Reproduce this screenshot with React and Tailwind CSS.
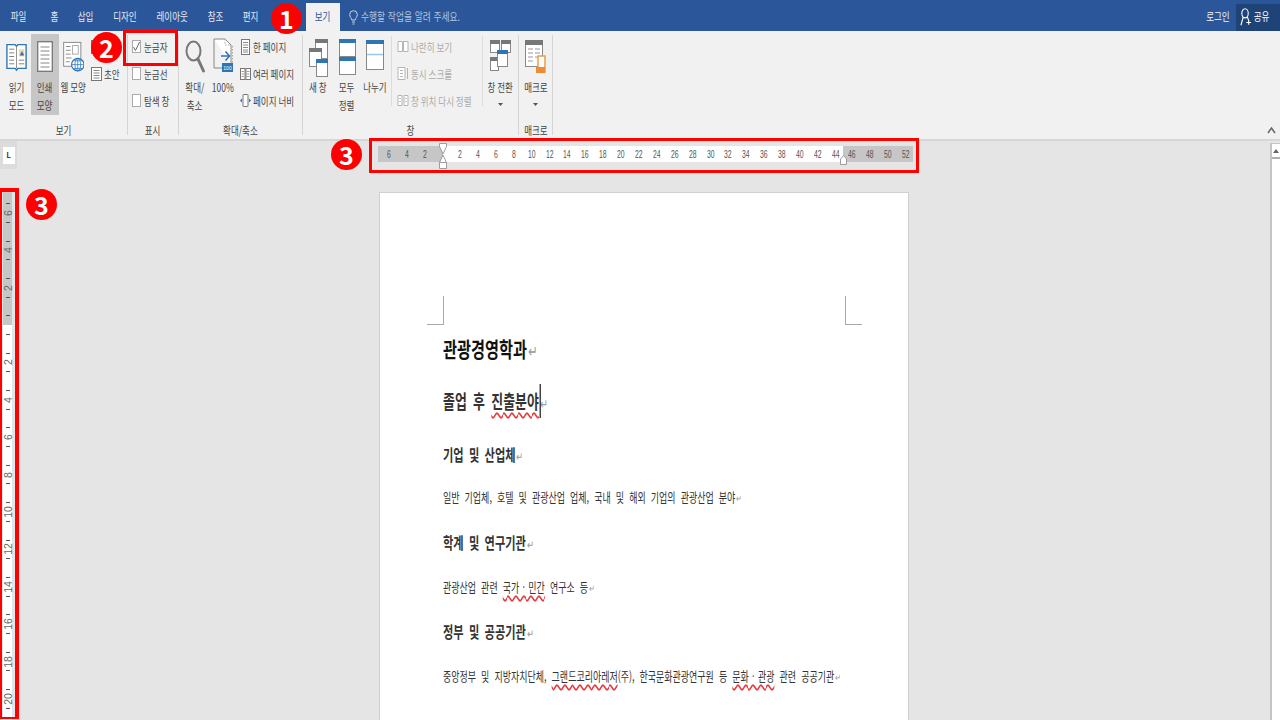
import React from 'react';

const big = 'block origin-center scale-x-[0.74] whitespace-nowrap text-[11.5px] leading-[18px] text-[#444]';
const small = 'block origin-left scale-x-[0.74] whitespace-nowrap text-[11.5px] leading-[18px]';
const badge = 'absolute flex h-[31px] w-[31px] items-center justify-center rounded-full bg-[#f00] text-[25px] leading-none font-bold text-white';

const tabs = [
  ['파일', 'w-[37px]'],
  ['홈', 'w-[34px]'],
  ['삽입', 'w-[30px]'],
  ['디자인', 'w-[48px]'],
  ['레이아웃', 'w-[46px]'],
  ['참조', 'w-[41px]'],
  ['편지', 'w-[30px]'],
];

const Book = () => (
  <svg className="mt-[5px] h-[31px] w-[21px]" viewBox="0 0 23 32" fill="none">
    <path d="M1 3h9l1.500 2L13 3h9v26h-9l-1.500 2L10 29H1z" fill="#fff" stroke="#2e75b6" strokeWidth="1.500" />
    <path d="M11.500 5v24" stroke="#888" />
    <path d="M3.500 8h5.500M3.500 12h5.500M3.500 16h5.500M3.500 20h5.500M3.500 24h5.500M14 20h6M14 24h6" stroke="#777" />
    <path d="M14 8h6v8h-6z" fill="#f4d8a8" />
    <path d="M15 15l2.500-5 2.500 5z" fill="#2e75b6" />
  </svg>
);

const PrintPage = () => (
  <svg className="mt-[5px] h-[31px] w-[16px]" viewBox="0 0 16 31" fill="none">
    <rect x=".7" y=".7" width="14.600" height="29.600" fill="#fff" stroke="#777" strokeWidth="1.300" />
    <path d="M3.500 6h9M3.500 10h9M3.500 14h9M3.500 18h9M3.500 22h9M3.500 26h9" stroke="#888" />
  </svg>
);

const WebPage = () => (
  <svg className="mt-[5px] h-[32px] w-[21px]" viewBox="0 0 22 32" fill="none">
    <rect x=".7" y=".7" width="18" height="25" fill="#fff" stroke="#888" />
    <path d="M3 5h5M3 9h5M3 13h5M3 17h6M3 21h4" stroke="#888" />
    <rect x="10" y="4" width="6" height="9" stroke="#aaa" />
    <circle cx="15.500" cy="24" r="6.500" fill="#fff" stroke="#2e75b6" strokeWidth="1.200" />
    <path d="M9 24h13M15.500 17.500v13M11 20h9M11 28h9" stroke="#2e75b6" strokeWidth=".8" />
    <ellipse cx="15.500" cy="24" rx="3" ry="6.500" stroke="#2e75b6" strokeWidth=".8" />
  </svg>
);

const LinesPage = () => (
  <svg className="h-[14px] w-[11px] shrink-0" viewBox="0 0 11 14" fill="none">
    <rect x=".5" y=".5" width="10" height="13" fill="#fff" stroke="#777" />
    <path d="M2.500 3.500h6M2.500 6h6M2.500 8.500h6M2.500 11h6" stroke="#888" />
  </svg>
);

const Magnifier = () => (
  <svg className="mt-[4px] h-[33px] w-[20px]" viewBox="0 0 20 33" fill="none">
    <ellipse cx="8.500" cy="11" rx="7" ry="9.500" stroke="#777" strokeWidth="2" />
    <path d="M13 19l5.500 12" stroke="#777" strokeWidth="3" strokeLinecap="round" />
  </svg>
);

const Hundred = () => (
  <svg className="mt-[2px] h-[35px] w-[21px]" viewBox="0 0 21 35" fill="none">
    <path d="M1 1h11l6 6v20" stroke="#888" fill="#fff" />
    <path d="M1 1v29h11" stroke="#888" />
    <path d="M12 1v6h6" stroke="#aaa" strokeDasharray="1.500 1.500" />
    <path d="M19.500 8v18" stroke="#aaa" strokeDasharray="1.500 1.500" />
    <path d="M8 18h8M12.500 13.500l4 4.500-4 4.500" stroke="#2e75b6" strokeWidth="1.600" />
    <rect x="9" y="25" width="11" height="9" fill="#2e75b6" />
    <text x="14.500" y="32" fontSize="5" fill="#fff" textAnchor="middle" fontFamily="Liberation Sans">100</text>
  </svg>
);

const OnePage = () => (
  <svg className="ml-px h-[16px] w-[9px] shrink-0" viewBox="0 0 9 16" fill="none">
    <rect x=".5" y=".5" width="8" height="15" fill="#fff" stroke="#777" />
    <path d="M2 3.500h5M2 6h5M2 8.500h5M2 11h5M2 13h5" stroke="#888" />
  </svg>
);

const TwoPages = ({ color = '#777' }) => (
  <svg className="h-[12px] w-[11px] shrink-0" viewBox="0 0 11 12" fill="none">
    <rect x=".5" y=".5" width="4.500" height="11" fill="#fff" stroke={color} />
    <rect x="6" y=".5" width="4.500" height="11" fill="#fff" stroke={color} />
    <path d="M1.500 3.500h2.500M1.500 6h2.500M1.500 8.500h2.500M7 3.500h2.500M7 6h2.500M7 8.500h2.500" stroke={color} strokeWidth=".7" />
  </svg>
);

const PageWidth = () => (
  <svg className="h-[13px] w-[11px] shrink-0" viewBox="0 0 11 13" fill="none">
    <rect x="3" y=".5" width="5" height="12" rx=".5" fill="#fff" stroke="#777" />
    <path d="M0 6.500l2-2v4zM11 6.500l-2-2v4z" fill="#2e75b6" />
  </svg>
);

const Win = ({ x, y, w, h, bar = '#777' }) => (
  <g>
    <rect x={x + 0.5} y={y + 0.5} width={w} height={h} fill="#fff" stroke="#888" />
    <rect x={x} y={y} width={w + 1} height="4" fill={bar} />
  </g>
);

const NewWindow = () => (
  <svg className="mt-[3px] h-[38px] w-[19px]" viewBox="0 0 19 38" fill="none">
    <Win x={6} y={0} w={12} h={19} />
    <Win x={0} y={9} w={12} h={18} />
    <Win x={7} y={20} w={11} h={17} bar="#2e75b6" />
  </svg>
);

const StackWindows = () => (
  <svg className="mt-[3px] h-[36px] w-[17px]" viewBox="0 0 17 36" fill="none">
    <Win x={0} y={0} w={16} h={17} bar="#2e75b6" />
    <Win x={0} y={18} w={16} h={17} bar="#2e75b6" />
  </svg>
);

const SplitWindow = () => (
  <svg className="mt-[4px] h-[30px] w-[18px]" viewBox="0 0 18 30" fill="none">
    <Win x={0} y={0} w={17} h={29} bar="#2e75b6" />
    <path d="M1 14.500h16" stroke="#9dc3e6" strokeWidth="1.500" />
  </svg>
);

const SideBySide = () => (
  <svg className="h-[13px] w-[12px] shrink-0" viewBox="0 0 12 13" fill="none">
    <path d="M1 1.500h4.500v10H1zM6.500 1.500H11v10H6.500z" fill="#fff" stroke="#b5b5b5" />
  </svg>
);

const SyncScroll = () => (
  <svg className="h-[15px] w-[12px] shrink-0" viewBox="0 0 12 15" fill="none">
    <path d="M1 1.500h7v12H1z" fill="#fff" stroke="#b5b5b5" />
    <path d="M3 4.500h3M3 7.500h3M3 10.500h3M10.500 2v11" stroke="#b5b5b5" />
  </svg>
);

const ResetPos = () => (
  <svg className="h-[13px] w-[12px] shrink-0" viewBox="0 0 12 13" fill="none">
    <path d="M1 1.500h4v10H1zM7 1.500h4v10H7z" fill="#fff" stroke="#b5b5b5" />
    <path d="M2 4.500h2M2 7.500h2M8 4.500h2M8 7.500h2" stroke="#c5c5c5" />
  </svg>
);

const SwitchWindows = () => (
  <svg className="mt-[4px] h-[31px] w-[21px]" viewBox="0 0 21 31" fill="none">
    <Win x={0} y={0} w={9} h={12} />
    <Win x={11} y={0} w={9} h={12} />
    <Win x={0} y={17} w={8} h={13} />
    <Win x={7} y={10} w={10} h={16} bar="#2e75b6" />
  </svg>
);

const Macro = () => (
  <svg className="mt-[4px] h-[34px] w-[21px]" viewBox="0 0 21 34" fill="none">
    <rect x=".5" y=".5" width="17" height="26" fill="#fff" stroke="#888" />
    <rect x="0" y="0" width="18" height="5" fill="#777" />
    <path d="M3 9h5M10 9h5M3 13h5M10 13h5M3 17h5M10 17h3M3 21h5" stroke="#999" />
    <path d="M13 16h7v16h-7z" fill="#fff" stroke="#ed9a4c" strokeWidth="1.500" />
    <path d="M11 27h9v6h-9z" fill="#ed8b36" />
  </svg>
);

const Check = ({ checked }) => (
  <span className="flex h-[13px] w-[9px] shrink-0 items-center justify-center border border-[#ababab] bg-white">
    {checked && (
      <svg className="h-[11px] w-[7px]" viewBox="0 0 7 11" fill="none">
        <path d="M.5 6l2 3.500L6.500 1" stroke="#666" />
      </svg>
    )}
  </span>
);

const BigBtn = ({ width, active, lines, icon, arrow }) => (
  <div className={`flex shrink-0 flex-col items-center ${width} ${active ? '-mt-[2px] h-[81px] bg-[#c6c6c6] pt-[2px]' : ''}`}>
    <div className="flex h-[42px] justify-center">{icon}</div>
    {lines.map((l) => (
      <span key={l} className={big}>{l}</span>
    ))}
    {arrow && (
      <svg className="mt-[7px] h-[3px] w-[5px]" viewBox="0 0 5 3">
        <path d="M0 0h5L2.500 3z" fill="#555" />
      </svg>
    )}
  </div>
);

const Row = ({ icon, text, color = 'text-[#444]', gap = 'gap-[3px]' }) => (
  <div className={`flex h-[27px] items-center ${gap}`}>
    {icon}
    {text && <span className={`${small} ${color}`}>{text}</span>}
  </div>
);

const Group = ({ width, label, children }) => (
  <div className={`mt-1 flex h-[100px] shrink-0 flex-col border-r border-[#d5d5d5] ${width}`}>
    <div className="flex flex-1 pt-px">{children}</div>
    <div className="-mb-[5px] flex h-[20px] justify-center">
      <span className={big + ' leading-[20px]'}>{label}</span>
    </div>
  </div>
);

const Mark = () => <span className="ml-px text-[0.75em] leading-none font-normal text-[#999]">↵</span>;

const hNums = [2, 4, 6, 8, 10, 12, 14, 16, 18, 20, 22, 24, 26, 28, 30, 32, 34, 36, 38, 40, 42, 44];

const RulerNum = ({ n }) => (
  <span className="flex w-[17.9px] shrink-0 justify-center">
    <span className="scale-x-[0.65] font-['Liberation_Sans',sans-serif] text-[10.5px] leading-[16px] text-[#555]">{n}</span>
  </span>
);

const Tick = () => <span className="h-px w-[4px] shrink-0 bg-[#555]" />;

const VCell = ({ n }) => (
  <div className="flex h-[37.4px] shrink-0 flex-col items-center justify-between py-[8.9px]">
    <Tick />
    <span className="-rotate-90 whitespace-nowrap font-['Liberation_Sans',sans-serif] text-[10.5px] leading-[10px] text-[#666]">{n}</span>
    <Tick />
  </div>
);

const HalfCell = () => (
  <div className="flex h-[18.7px] shrink-0 flex-col items-center justify-center">
    <Tick />
  </div>
);

const h1 = 'h-[24px] origin-left scale-x-[0.725] whitespace-nowrap text-[21px] leading-[24px] font-bold text-[#111]';
const h2 = 'h-[24px] origin-left scale-x-[0.68] whitespace-nowrap text-[19px] leading-[24px] font-bold text-[#333] [word-spacing:5px]';
const h3 = 'h-[24px] origin-left scale-x-[0.7] whitespace-nowrap text-[16px] leading-[24px] font-semibold text-[#333] [word-spacing:4px]';
const body = 'h-[24px] origin-left scale-x-[0.69] whitespace-nowrap text-[13px] leading-[24px] text-[#333] [word-spacing:4.500px]';
const wavy = 'underline decoration-wavy decoration-[#e8383d] decoration-[1.5px] underline-offset-[3px] [word-spacing:0px]';

export default function App() {
  return (
    <div className="relative flex h-[720px] w-[1280px] flex-col overflow-hidden bg-[#e5e5e5] font-['Noto_Sans_CJK_KR','Noto_Sans',sans-serif]">
      {/* title bar */}
      <div className="flex h-[31px] shrink-0 items-end bg-[#2b579a]">
        {tabs.map(([t, w]) => (
          <div key={t} className={`flex h-[28px] shrink-0 items-center justify-center ${w}`}>
            <span className="scale-x-[0.74] whitespace-nowrap text-[11.5px] text-[#e6ebf4]">{t}</span>
          </div>
        ))}
        <div className="ml-[40px] flex h-[28px] w-[34px] shrink-0 items-center justify-center bg-[#f1f1f1]">
          <span className="scale-x-[0.74] whitespace-nowrap text-[11.5px] text-[#2b579a]">보기</span>
        </div>
        <div className="ml-[9px] flex h-[28px] items-center gap-[3px]">
          <svg className="h-[15px] w-[9px]" viewBox="0 0 9 15" fill="none">
            <path d="M2.800 10C2.500 8 .7 7.200.7 4.500a3.800 3.800 0 0 1 7.600 0C8.300 7.200 6.500 8 6.200 10z" stroke="#c5d2e6" />
            <path d="M3 12h3M3.500 14h2" stroke="#c5d2e6" />
          </svg>
          <span className="origin-left scale-x-[0.76] whitespace-nowrap text-[11.5px] text-[#b4c4dd] [word-spacing:1px]">수행할 작업을 알려 주세요.</span>
        </div>
        <div className="ml-auto flex h-[28px] items-center">
          <span className="mr-[2px] scale-x-[0.74] whitespace-nowrap text-[11.5px] text-[#f2f5fa]">로그인</span>
          <div className="flex h-[27px] w-[44px] items-center bg-[#1e4377] pl-[4px]">
            <svg className="h-[20px] w-[11px] shrink-0" viewBox="0 0 12 20" fill="none">
              <ellipse cx="5.500" cy="6" rx="3.500" ry="5" stroke="#fff" strokeWidth="1.200" />
              <path d="M1 19l2.500-9M8 10l1.500 4M7 16h5M9.500 13.500v5" stroke="#fff" strokeWidth="1.200" />
            </svg>
            <span className="scale-x-[0.74] whitespace-nowrap text-[11.5px] text-white">공유</span>
          </div>
        </div>
      </div>

      {/* ribbon */}
      <div className="flex h-[110px] shrink-0 border-b-2 border-[#d6d6d6] bg-[#f1f1f1]">
        <Group width="w-[128px]" label="보기">
          <BigBtn width="w-[33px]" icon={<Book />} lines={['읽기', '모드']} />
          <div className="-ml-[2px]">
            <BigBtn width="w-[28px]" active icon={<PrintPage />} lines={['인쇄', '모양']} />
          </div>
          <BigBtn width="w-[29px]" icon={<WebPage />} lines={['웹 모양']} />
          <div className="-mt-[3px] ml-[3px] flex flex-col">
            <Row icon={<LinesPage />} gap="gap-[2px]" />
            <Row icon={<LinesPage />} text="초안" gap="gap-[2px]" />
          </div>
        </Group>

        <Group width="w-[51px]" label="표시">
          <div className="-mt-[3px] ml-[4px] flex flex-col">
            <Row icon={<Check checked />} text="눈금자" />
            <Row icon={<Check />} text="눈금선" />
            <Row icon={<Check />} text="탐색 창" />
          </div>
        </Group>

        <Group width="w-[124px]" label="확대/축소">
          <BigBtn width="w-[31px]" icon={<Magnifier />} lines={['확대/', '축소']} />
          <BigBtn width="w-[26px]" icon={<Hundred />} lines={['100%']} />
          <div className="-mt-[3px] ml-[4px] flex flex-col">
            <Row icon={<OnePage />} text="한 페이지" />
            <Row icon={<TwoPages />} text="여러 페이지" gap="gap-[2px]" />
            <Row icon={<PageWidth />} text="페이지 너비" gap="gap-[2px]" />
          </div>
        </Group>

        <Group width="w-[216px]" label="창">
          <BigBtn width="w-[30px]" icon={<NewWindow />} lines={['새 창']} />
          <BigBtn width="w-[28px]" icon={<StackWindows />} lines={['모두', '정렬']} />
          <BigBtn width="w-[28px]" icon={<SplitWindow />} lines={['나누기']} />
          <div className="ml-[2px] h-[70px] border-l border-[#dcdcdc]" />
          <div className="-mt-[3px] ml-[5px] flex w-[85px] shrink-0 flex-col">
            <Row icon={<SideBySide />} text="나란히 보기" color="text-[#aaa]" gap="gap-[2px]" />
            <Row icon={<SyncScroll />} text="동시 스크롤" color="text-[#aaa]" gap="gap-[2px]" />
            <Row icon={<ResetPos />} text="창 위치 다시 정렬" color="text-[#aaa]" gap="gap-[2px]" />
          </div>
          <div className="h-[70px] border-l border-[#dcdcdc]" />
          <BigBtn width="w-[34px]" icon={<SwitchWindows />} lines={['창 전환']} arrow />
        </Group>

        <Group width="w-[34px]" label="매크로">
          <BigBtn width="w-[33px]" icon={<Macro />} lines={['매크로']} arrow />
        </Group>

        <svg className="mr-[4px] mb-[5px] ml-auto h-[7px] w-[9px] self-end" viewBox="0 0 9 7" fill="none">
          <path d="M1 6l3.500-5L8 6" stroke="#666" strokeWidth="1.500" />
        </svg>
      </div>

      {/* workspace */}
      <div className="flex min-h-0 flex-1">
        <div className="flex w-[17px] shrink-0 flex-col">
          <div className="flex h-[28px] shrink-0 items-center justify-center bg-[#dcdcdc]">
            <div className="flex h-[17px] w-[12px] items-center justify-center bg-white text-[8px] font-bold text-[#444]">L</div>
          </div>
          <div className="mt-[23px] ml-[3px] flex w-[10px] flex-1 flex-col border-r border-[#dbe7ec]">
            <div className="flex h-[133px] shrink-0 flex-col items-center bg-[#c6c6c6] pt-[2.300px]">
              {[6, 4, 2].map((n) => <VCell key={n} n={n} />)}
              <HalfCell />
            </div>
            <div className="flex flex-1 flex-col items-center bg-white">
              <HalfCell />
              {[2, 4, 6, 8, 10, 12, 14, 16, 18, 20].map((n) => <VCell key={n} n={n} />)}
            </div>
          </div>
        </div>

        <div className="flex min-w-0 flex-1 flex-col">
          <div className="mt-[5px] ml-[361px] flex h-[16px] w-[535px] shrink-0">
            <div className="flex w-[65px] shrink-0 justify-end bg-[#c6c6c6] pr-[9.500px]">
              {[6, 4, 2].map((n) => <RulerNum key={n} n={n} />)}
            </div>
            <div className="flex w-[400px] shrink-0 bg-white pl-[8px]">
              {hNums.map((n) => <RulerNum key={n} n={n} />)}
            </div>
            <div className="flex w-[70px] shrink-0 bg-[#c6c6c6]">
              {[46, 48, 50, 52].map((n) => <RulerNum key={n} n={n} />)}
            </div>
          </div>

          <div className="mt-[30px] ml-[362px] min-h-0 w-[530px] flex-1 overflow-hidden border border-b-0 border-[#d0d0d0] bg-white">
            <div className="mt-[103px] ml-[47px] flex w-[435px] justify-between">
              <span className="h-[29px] w-[17px] border-r border-b border-[#aaa]" />
              <span className="h-[29px] w-[17px] border-b border-l border-[#aaa]" />
            </div>
            <div className="ml-[63px] flex flex-col">
              <p className={`mt-[11px] ${h1}`}>관광경영학과<Mark /></p>
              <p className={`mt-[29px] ${h2}`}>
                졸업 후 <span className={wavy}>진출분야</span>
                <span className="relative">
                  <span className="absolute -top-[3px] left-[1px] h-[34px] w-[1.500px] bg-[#333]" />
                </span>
                <Mark />
              </p>
              <p className={`mt-[29px] ${h3}`}>기업 및 산업체<Mark /></p>
              <p className={`mt-[19px] ${body}`}>일반 기업체, 호텔 및 관광산업 업체, 국내 및 해외 기업의 관광산업 분야<Mark /></p>
              <p className={`mt-[21px] ${h3}`}>학계 및 연구기관<Mark /></p>
              <p className={`mt-[21px] ${body}`}>관광산업 관련 <span className={wavy}>국가 · 민간</span> 연구소 등<Mark /></p>
              <p className={`mt-[20px] ${h3}`}>정부 및 공공기관<Mark /></p>
              <p className={`mt-[21px] ${body}`}>
                중앙정부 및 지방자치단체, <span className={wavy}>그랜드코리아레저</span>(주), 한국문화관광연구원 등 <span className={wavy}>문화 · 관광</span> 관련 공공기관<Mark />
              </p>
            </div>
          </div>
        </div>

        <div className="mt-[2px] flex w-[10px] shrink-0 flex-col border-t border-l-2 border-[#c4c4c4] bg-white">
          <div className="flex h-[15px] items-center justify-center border-b-2 border-[#b0b0b0]">
            <svg className="h-[4px] w-[6px]" viewBox="0 0 6 4">
              <path d="M3 0l3 4H0z" fill="#666" />
            </svg>
          </div>
        </div>
      </div>

      {/* ruler indent handles */}
      <div className="absolute top-[143px] left-[439px] h-[26px] w-[8px]">
        <svg className="h-full w-full" viewBox="0 0 8 26" fill="none">
          <path d="M.5.5h7v3L4 11 .5 3.500z" fill="#fff" stroke="#888" strokeWidth=".8" />
          <path d="M4 12l3.500 7.500v6h-7v-6z" fill="#fff" stroke="#888" strokeWidth=".8" />
          <path d="M.5 19.500h7" stroke="#888" strokeWidth=".8" />
        </svg>
      </div>
      <svg className="absolute top-[155px] left-[840px] h-[10px] w-[7px]" viewBox="0 0 7 10" fill="none">
        <path d="M3.500.5L6.500 4v5.500h-6V4z" fill="#fff" stroke="#888" strokeWidth=".8" />
      </svg>

      {/* annotations */}
      <div className="absolute top-[30px] left-[123px] h-[36px] w-[55px] border-[3px] border-[#f00]" />
      <div className="absolute top-[138px] left-[369px] h-[35px] w-[550px] border-[3px] border-[#f00]" />
      <div className="absolute top-[188px] left-0 h-[531px] w-[19px] border-t-[4px] border-r-[4px] border-b-[2px] border-l-[2px] border-[#f00]" />
      <div className={`${badge} top-[3px] left-[271px]`}>1</div>
      <div className={`${badge} top-[32px] left-[91px]`}>2</div>
      <div className={`${badge} top-[139px] left-[331px]`}>3</div>
      <div className={`${badge} top-[189px] left-[26px]`}>3</div>
    </div>
  );
}
